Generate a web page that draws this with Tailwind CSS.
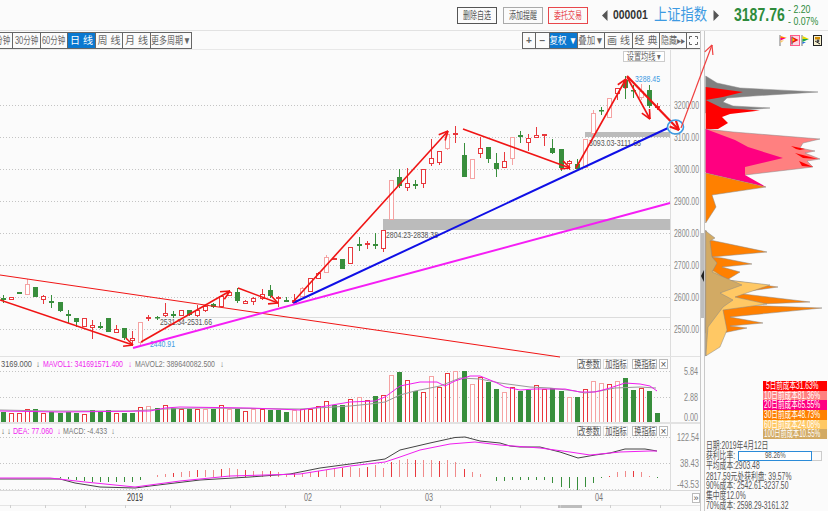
<!DOCTYPE html>
<html lang="zh">
<head>
    <meta charset="UTF-8">
    <title>上证指数 - 日线</title>
    <script src="https://cdn.jsdelivr.net/npm/@tailwindcss/browser@4"></script>
</head>
<body class="w-[828px] h-[511px] overflow-hidden bg-[#fbfbfb] text-[#555] font-['Liberation_Sans','Noto_Sans_CJK_SC',sans-serif]">
    <!-- top bar -->
    <header class="h-[31px] border-b border-[#e2e2e2] flex items-center pl-[457px]">
        <div class="w-[40px] h-[17px] border border-[#555] flex items-center justify-center"><span class="inline-block whitespace-nowrap text-[10px] scale-x-[.7]">删除自选</span></div>
        <div class="w-[40px] h-[17px] ml-[6px] border border-[#aaa] flex items-center justify-center"><span class="inline-block whitespace-nowrap text-[10px] scale-x-[.7]">添加提醒</span></div>
        <div class="w-[40px] h-[17px] ml-[5px] border border-[#e8474c] text-[#e8474c] flex items-center justify-center"><span class="inline-block whitespace-nowrap text-[10px] scale-x-[.7]">委托交易</span></div>
        <svg class="ml-[14px]" width="6" height="11" viewBox="0 0 6 11"><path d="M5.5 0V11L0 5.5Z" fill="#555"/></svg>
        <span class="w-[35px] ml-[5px] inline-block whitespace-nowrap origin-left scale-x-[.8] text-[13px] font-bold text-[#333]">000001</span>
        <span class="w-[54px] ml-[6px] inline-block whitespace-nowrap origin-left scale-x-[.83] text-[16px] text-[#3d9ae2]">上证指数</span>
        <svg class="ml-[5px]" width="6" height="11" viewBox="0 0 6 11"><path d="M0.5 0V11L6 5.5Z" fill="#555"/></svg>
        <span class="w-[50px] ml-[15px] inline-block whitespace-nowrap origin-left scale-x-[.78] text-[18px] font-bold text-[#2e8b3c]">3187.76</span>
        <div class="ml-[4px] flex flex-col text-[#2e8b3c] text-[11px] leading-[12px]">
            <span class="inline-block whitespace-nowrap origin-left scale-x-[.8]">- 2.20</span>
            <span class="inline-block whitespace-nowrap origin-left scale-x-[.8]">- 0.07%</span>
        </div>
    </header>

    <div class="flex h-[480px]">
        <!-- chart column -->
        <div class="w-[701px] shrink-0 border-r border-[#c9c9c9] flex flex-col">
            <div class="h-[19px] shrink-0 border-b border-[#e8e8e8] flex justify-between pt-px">
                <div class="h-[17px] flex overflow-hidden border-y border-[#666] border-r text-[10px] text-[#666]">
                    <div class="w-[27px] -ml-[14px] border-r border-[#666] flex items-center justify-center"><span class="inline-block whitespace-nowrap scale-x-[.75]">15分钟</span></div>
                    <div class="w-[28px] border-r border-[#666] flex items-center justify-center"><span class="inline-block whitespace-nowrap scale-x-[.75]">30分钟</span></div>
                    <div class="w-[27px] border-r border-[#666] flex items-center justify-center"><span class="inline-block whitespace-nowrap scale-x-[.75]">60分钟</span></div>
                    <div class="w-[28px] bg-[#0a78d0] text-white border-r border-[#666] flex items-center justify-center"><span class="inline-block whitespace-nowrap">日 线</span></div>
                    <div class="w-[27px] border-r border-[#666] flex items-center justify-center"><span class="inline-block whitespace-nowrap">周 线</span></div>
                    <div class="w-[28px] border-r border-[#666] flex items-center justify-center"><span class="inline-block whitespace-nowrap">月 线</span></div>
                    <div class="w-[40px] flex items-center justify-center"><span class="inline-block whitespace-nowrap scale-x-[.8]">更多周期▼</span></div>
                </div>
                <div class="h-[17px] flex border-y border-l border-[#666] text-[10px] text-[#666]">
                    <div class="w-[13px] border-r border-[#666] flex items-center justify-center font-bold">+</div>
                    <div class="w-[14px] border-r border-[#666] flex items-center justify-center font-bold">−</div>
                    <div class="w-[28px] bg-[#0a78d0] text-white border-r border-[#666] flex items-center justify-center"><span class="inline-block whitespace-nowrap scale-x-[.85]">复权 ▼</span></div>
                    <div class="w-[27px] border-r border-[#666] flex items-center justify-center"><span class="inline-block whitespace-nowrap scale-x-[.85]">叠加▼</span></div>
                    <div class="w-[28px] border-r border-[#666] flex items-center justify-center"><span class="inline-block whitespace-nowrap">画 线</span></div>
                    <div class="w-[27px] border-r border-[#666] flex items-center justify-center"><span class="inline-block whitespace-nowrap">经 典</span></div>
                    <div class="w-[27px] border-r border-[#666] flex items-center justify-center"><span class="inline-block whitespace-nowrap scale-x-[.8]">隐藏▸▸</span></div>
                    <div class="w-[13px] flex items-center justify-center">
                        <svg width="9" height="9" viewBox="0 0 9 9" fill="none" stroke="#666"><path d="M.5 3V.5H3M6 .5H8.5V3M8.5 6V8.5H6M3 8.5H.5V6"/></svg>
                    </div>
                </div>
            </div>

            <!-- candles -->
            <div class="relative z-10 h-[307px] shrink-0">
                <svg id="price" class="block overflow-visible" width="700" height="307" viewBox="0 50 700 307">
                    <rect x="383" y="219" width="287" height="11" fill="#bbbbbb"/>
                    <rect x="585" y="132" width="85" height="5" fill="#bbbbbb"/>
                    <line x1="160" y1="317.5" x2="670" y2="317.5" stroke="#dcdcdc"/>
                    <line x1="670.5" y1="50" x2="670.5" y2="357" stroke="#dddddd"/>
                    <line x1="0" y1="356.5" x2="700" y2="356.5" stroke="#e2e2e2"/>
                </svg>
                <div class="absolute top-[1px] left-[623px] w-[42px] h-[11px] bg-white border border-[#ccc] flex items-center justify-center text-[10px] text-[#666]"><span class="inline-block whitespace-nowrap scale-x-[.72]">设置均线 ▾</span></div>
            </div>

            <!-- volume -->
            <div class="relative h-[67px] shrink-0 border-b-2 border-[#e2e2e2]">
                <svg id="vol" class="block" width="700" height="65" viewBox="0 357 700 65"></svg>
                <div class="absolute top-[2px] left-[577px] flex text-[10px] text-[#555]">
                    <div class="w-[24px] h-[10px] bg-white border border-[#bbb] flex items-center justify-center"><span class="inline-block whitespace-nowrap scale-x-[.72]">改参数</span></div>
                    <div class="w-[25px] h-[10px] ml-[2px] bg-white border border-[#ddd] flex items-center justify-center"><span class="inline-block whitespace-nowrap scale-x-[.72]">加指标</span></div>
                    <div class="w-[25px] h-[10px] ml-[4px] bg-white border border-[#bbb] flex items-center justify-center"><span class="inline-block whitespace-nowrap scale-x-[.72]">换指标</span></div>
                    <div class="w-[9px] h-[10px] ml-[2px] bg-white border border-[#bbb] flex items-center justify-center">×</div>
                </div>
            </div>

            <!-- macd -->
            <div class="relative h-[67px] shrink-0 border-b border-[#d8d8d8]">
                <svg id="macd" class="block" width="700" height="66" viewBox="0 424 700 66"></svg>
                <div class="absolute top-[2px] left-[577px] flex text-[10px] text-[#555]">
                    <div class="w-[24px] h-[10px] bg-white border border-[#bbb] flex items-center justify-center"><span class="inline-block whitespace-nowrap scale-x-[.72]">改参数</span></div>
                    <div class="w-[25px] h-[10px] ml-[2px] bg-white border border-[#ddd] flex items-center justify-center"><span class="inline-block whitespace-nowrap scale-x-[.72]">加指标</span></div>
                    <div class="w-[25px] h-[10px] ml-[4px] bg-white border border-[#bbb] flex items-center justify-center"><span class="inline-block whitespace-nowrap scale-x-[.72]">换指标</span></div>
                    <div class="w-[9px] h-[10px] ml-[2px] bg-white border border-[#bbb] flex items-center justify-center">×</div>
                </div>
            </div>

            <!-- date strip -->
            <div class="relative flex-1">
                <svg id="dates" class="block" width="700" height="20" viewBox="0 491 700 20">
                    <line x1="0" y1="505.5" x2="700" y2="505.5" stroke="#e4e4e4"/>
                    <rect x="558" y="505" width="24" height="3" fill="#bdbdbd"/>
                </svg>
                <div class="absolute right-0 top-[2px] w-[8px] h-[10px] border border-[#bbb] bg-white flex items-center justify-center text-[9px] leading-none">»</div>
            </div>
        </div>

        <!-- collapse handle -->
        <div class="w-[4px] shrink-0 border-r border-[#c9c9c9] relative">
            <div class="absolute top-[202px] left-0 w-[3px] h-[85px] bg-[#bdbdbd]"></div>
            <svg class="absolute top-[239px] left-0" width="3" height="12" viewBox="0 0 3 12"><path d="M3 0V12L0 6Z" fill="#222"/></svg>
        </div>

        <!-- chip distribution -->
        <div class="flex-1 flex flex-col">
            <div class="h-[19px] shrink-0 flex items-center pl-[74px]">
                <svg width="8" height="11" viewBox="0 0 8 11"><path d="M1 0V11" stroke="#777"/><path d="M1.5 1L8 3H1.5Z" fill="#ff8000"/><path d="M1.5 3H7L1.5 5.5Z" fill="#ff0080"/><path d="M1.5 5.5H5L1.5 8Z" fill="#ffc864"/></svg>
                <svg class="ml-[3px]" width="10" height="11" viewBox="0 0 10 11"><rect x=".5" y=".5" width="9" height="10" fill="#ffd7e4" stroke="#ff5a8a"/><path d="M2 1.5V9.5" stroke="#333"/><path d="M2.5 2L8.5 5L2.5 8Z" fill="#e81010"/><path d="M2.5 3L5 5L2.5 6.5Z" fill="#ffd000"/></svg>
                <svg class="ml-[1px]" width="8" height="11" viewBox="0 0 8 11"><path d="M1 0V11" stroke="#777"/><path d="M1.5 1L8 4H1.5Z" fill="#e6d800"/><path d="M1.5 4H8L1.5 7Z" fill="#1aa84a"/><path d="M1.5 7H5L1.5 9Z" fill="#1d6fe0"/></svg>
                <svg class="ml-[4px]" width="9" height="11" viewBox="0 0 9 11"><rect x=".5" y=".5" width="8" height="10" fill="#f6f0d0" stroke="#222"/><path d="M2 2H7V4.5H2Z" fill="#d08a00"/><path d="M2 6L7 9" stroke="#222"/><circle cx="5" cy="6" r="1.4" fill="#4a4a4a"/></svg>
            </div>
            <svg id="chips" class="block shrink-0" width="122" height="331" viewBox="705 50 122 331">
                <!-- upper lobe -->
                <polygon fill="#808080" stroke="#888" stroke-width=".5" points="705.7,76 717,83 740,88 818,92 753,96 727,98 723,102 733,106 770,108 705.7,113"/>
                <polygon fill="#ff0000" points="705.7,87 743,92 723,97 705.7,100 722,108 760,110.5 730,114 722,117 728,123 718,129 705.7,129"/>
                <polygon fill="#ff8080" stroke="#888" stroke-width=".5" points="705.7,129 733,132 820,139 803,143 800,148 815,151 805,153 820,159 807,161 813,167 745,175 705.7,172"/>
                <polygon fill="#ff0000" points="791,146 805,149 800,150 796,149"/>
                <polygon fill="#ff0000" points="795,153 818,159 803,158"/>
                <polygon fill="#ff0000" points="799,161 813,167 802,166"/>
                <polygon fill="#ff0080" points="705.7,129 735,140 748,147 783,158 745,167 745,175 766,187 705.7,173"/>
                <polygon fill="#ff8000" stroke="#888" stroke-width=".5" points="705.7,173 766,187 712,195 716,207 705.7,223"/>
                <!-- lower lobe -->
                <polygon fill="#ff8000" stroke="#888" stroke-width=".5" points="705.7,230 710,240 767,252 712,257 722,258 752,264 722,267 740,272 727,280 778,287 735,293 810,302 738,305 822,308 730,317 763,323 730,326 747,328 723,333 705.7,333"/>
                <polygon fill="#ffc864" stroke="#888" stroke-width=".5" points="705.7,356 705.7,270 714,271 727,280 770,285 735,297 767,304 723,310 727,330 720,347"/>
                <polygon fill="#d2aa64" stroke="#888" stroke-width=".5" points="705.7,231 715,238 710,241 712,257 717,263 712,272 742,285 720,293 733,300 723,307 708,327 705.7,356"/>
            </svg>
            <div class="flex justify-end pr-[5px]">
                <div class="w-[64px] text-[10px] leading-[10px] text-white">
                    <div class="h-[9.7px] pl-[3px] bg-[#ff0000] overflow-hidden"><span class="inline-block whitespace-nowrap origin-left scale-x-[.66]">5日前成本31.63%</span></div>
                    <div class="h-[9.7px] pl-[1px] bg-[#ff8080] overflow-hidden"><span class="inline-block whitespace-nowrap origin-left scale-x-[.66]">10日前成本81.36%</span></div>
                    <div class="h-[9.7px] pl-[1px] bg-[#ff0080] overflow-hidden"><span class="inline-block whitespace-nowrap origin-left scale-x-[.66]">20日前成本65.55%</span></div>
                    <div class="h-[9.7px] pl-[1px] bg-[#ff8000] overflow-hidden"><span class="inline-block whitespace-nowrap origin-left scale-x-[.66]">30日前成本48.73%</span></div>
                    <div class="h-[9.7px] pl-[1px] bg-[#ffc864] overflow-hidden"><span class="inline-block whitespace-nowrap origin-left scale-x-[.66]">60日前成本24.08%</span></div>
                    <div class="h-[9.7px] pl-[1px] bg-[#d2aa64] overflow-hidden"><span class="inline-block whitespace-nowrap origin-left scale-x-[.62]">100日前成本10.55%</span></div>
                </div>
            </div>
            <div class="mt-[2px] ml-[1px] text-[10px] leading-[9.7px] text-[#555]">
                <div class="whitespace-nowrap origin-left scale-x-[.68]">日期:2019年4月12日</div>
                <div class="flex items-center h-[10px]">
                    <span class="w-[32px] whitespace-nowrap origin-left scale-x-[.68]">获利比率:</span>
                    <div class="w-[84px] h-[10px] border border-[#ccc] flex">
                        <div class="w-[74px] -my-px -ml-px border border-[#2b8bd8] bg-white flex items-center justify-center"><span class="inline-block whitespace-nowrap scale-x-[.68] text-[9px]">98.26%</span></div>
                    </div>
                </div>
                <div class="whitespace-nowrap origin-left scale-x-[.68]">平均成本:2903.48</div>
                <div class="mt-px whitespace-nowrap origin-left scale-x-[.68]">2817.59元处获利盘: 39.57%</div>
                <div class="whitespace-nowrap origin-left scale-x-[.68]">90%成本: 2542.61-3237.50</div>
                <div class="whitespace-nowrap origin-left scale-x-[.68]">集中度12.0%</div>
                <div class="whitespace-nowrap origin-left scale-x-[.68]">70%成本: 2598.29-3161.32</div>
            </div>
        </div>
    </div>

    <script>
        const NS = 'http://www.w3.org/2000/svg';
        const RED = '#e8383d', PALE = '#f5a3a3', GREEN = '#388e3c';
        const xAt = i => 3 + i * 8.08;
        function el(parent, name, attrs, text) {
            const node = document.createElementNS(NS, name);
            for (const k in attrs) node.setAttribute(k, attrs[k]);
            if (text) node.textContent = text;
            parent.appendChild(node);
            return node;
        }
        // text is squeezed sideways in the source picture, hence textLength
        function label(parent, x, y, str, len, fill, size) {
            el(parent, 'text', { x, y, fill, 'font-size': size || 10, textLength: len, lengthAdjust: 'spacingAndGlyphs' }, str);
        }
        function dotted(parent, y) {
            el(parent, 'line', { x1: 0, y1: y + .5, x2: 670, y2: y + .5, stroke: '#c4c4c4', 'stroke-dasharray': '1 2' });
        }
        function line(parent, pts, stroke, width) {
            el(parent, 'polyline', { points: pts.map(p => p.join(',')).join(' '), fill: 'none', stroke, 'stroke-width': width || 1 });
        }
        function arrow(parent, x1, y1, x2, y2, width, stroke) {
            const color = stroke || '#f01414';
            el(parent, 'line', { x1, y1, x2, y2, stroke: color, 'stroke-width': width });
            const a = Math.atan2(y2 - y1, x2 - x1);
            [-.45, .45].forEach(d => {
                el(parent, 'line', { x1: x2, y1: y2, x2: x2 - 10 * Math.cos(a + d), y2: y2 - 10 * Math.sin(a + d), stroke: color, 'stroke-width': width });
            });
        }

        // hi, top, bottom, low, colour
        const candles = [
            [295,298,300,303,'g'],[297,297,299,300,'r'],[292,292,294,294,'g'],[279,284,294,295,'r'],[287,287,297,297,'g'],[295,296,299,304,'r'],
            [295,301,303,308,'g'],[302,302,311,312,'g'],[310,314,316,323,'g'],[318,318,322,327,'g'],[318,318,326,326,'r'],[320,325,327,339,'r'],
            [322,326,328,329,'g'],[318,318,332,332,'g'],[325,329,332,332,'r'],[328,328,338,340,'g'],[331,338,340,346,'r'],[322,322,342,346,'r'],
            [315,317,318,321,'r'],[316,317,318,320,'g'],[303,313,315,317,'r'],[311,314,316,318,'g'],[310,310,315,315,'r'],[310,310,315,316,'g'],
            [305,310,315,317,'r'],[305,306,310,312,'r'],[303,304,307,308,'g'],[295,296,306,306,'r'],[290,292,295,295,'r'],[288,292,301,303,'g'],
            [300,301,303,304,'r'],[297,298,301,305,'r'],[289,294,298,300,'r'],[285,290,296,298,'g'],[296,297,298,307,'r'],[297,300,302,302,'g'],
            [294,300,302,305,'r'],[287,288,296,297,'r'],[278,278,291,291,'r'],[272,273,278,278,'r'],[255,257,272,273,'r'],[258,258,259,259,'r'],
            [259,259,269,269,'g'],[247,247,263,263,'r'],[237,244,246,251,'g'],[241,243,244,249,'r'],[233,244,246,249,'g'],[230,230,248,252,'r'],
            [180,180,219,219,'r'],[169,177,186,188,'g'],[168,183,187,191,'r'],[180,184,186,189,'g'],[169,169,183,188,'r'],[139,158,163,166,'r'],
            [151,151,162,165,'r'],[134,134,148,150,'r'],[126,133,134,143,'r'],[143,155,177,177,'g'],[159,159,178,179,'r'],[137,148,153,158,'r'],
            [147,147,159,163,'g'],[153,163,169,177,'g'],[152,161,167,168,'r'],[137,137,158,165,'r'],[131,135,137,143,'g'],[134,138,142,151,'r'],
            [127,135,137,138,'r'],[134,134,135,146,'r'],[139,148,153,154,'g'],[149,149,168,171,'g'],[160,161,163,170,'r'],[159,164,169,169,'g'],
            [139,139,167,168,'r'],[110,113,133,135,'r'],[107,110,111,115,'g'],[98,98,117,118,'r'],[88,88,93,100,'r'],[76,80,88,99,'g'],
            [85,90,91,98,'g'],[84,91,97,100,'r'],[85,90,106,108,'g'],[103,106,107,110,'r']
        ];
        const paleCandles = [3,17,37,40,48,55,58,63,72,73,75,79];

        const price = document.getElementById('price');
        [3200,3100,3000,2900,2800,2700,2600,2500].forEach((v, i) => {
            const y = 105 + i * 32;
            dotted(price, y);
            label(price, 674, y + 4, v.toFixed(2), 25, '#888');
        });
        candles.forEach((c, i) => {
            const x = Math.round(xAt(i));
            const col = c[4] === 'g' ? GREEN : (paleCandles.includes(i) ? PALE : RED);
            el(price, 'line', { x1: x + .5, y1: c[0], x2: x + .5, y2: c[3], stroke: col });
            if (c[4] === 'g') el(price, 'rect', { x: x - 2, y: c[1], width: 5, height: Math.max(c[2] - c[1], 1.5), fill: col });
            else el(price, 'rect', { x: x - 2 + .5, y: c[1] + .5, width: 4, height: Math.max(c[2] - c[1], 1), fill: '#fff', stroke: col });
        });

        label(price, 160, 325, '2531.34-2531.66', 52, '#555', 9);
        label(price, 386, 238, '2804.23-2838.38', 52, '#555', 9);
        label(price, 589, 146, '3093.03-3111.66', 52, '#555', 9);
        label(price, 635, 82, '3288.45', 25, '#3d9ae2', 9);
        label(price, 150, 347, '2440.91', 25, '#3d9ae2', 9);

        line(price, [[0,275],[560,357]], '#f01414');
        line(price, [[293,303],[668,128]], '#0f0fe6', 2);
        line(price, [[133,348],[670,203]], '#f51ef5', 2);
        arrow(price, 0, 300, 133, 345, 1.6);
        arrow(price, 141, 342, 230, 291, 1.6);
        arrow(price, 238, 288, 278, 303, 1.6);
        arrow(price, 293, 302, 448, 131, 1.6);
        arrow(price, 463, 129, 570, 168, 1.6);
        arrow(price, 576, 168, 626, 79, 1.6);
        arrow(price, 627, 77, 650, 119, 1.6);
        arrow(price, 627, 76, 679, 130, 2.2);
        el(price, 'ellipse', { cx: 675.5, cy: 127, rx: 8, ry: 7, fill: 'none', stroke: '#3d9ae2', 'stroke-width': 1.6 });
        arrow(price, 681, 128, 712, 45, 1.2, '#f04040');

        // volume: bar top, colour (g / r / p = pale red)
        const volumes = [
            '412g','413r','413r','409r','409g','413r','412g','413g','412g','413g','414r','410g','412g','410g','413r','413g','413g','407r','406p','408g',
            '405r','408g','409r','409g','409r','409p','409g','405r','409p','409g','411r','409p','409r','410g','410g','412g','410p','409r','409r','406r',
            '401r','405g','405g','399r','397p','400r','396g','395r','375p','372g','380r','391g','392r','376p','387r','373r','371p','371g','384p','377r',
            '382g','389g','392p','387r','391g','390g','385r','389r','388g','391g','397p','397g','389r','381p','383p','384r','381p','378g','390g','388r',
            '391g','413g'
        ];
        const vol = document.getElementById('vol');
        [371, 397].forEach(y => dotted(vol, y));
        el(vol, 'line', { x1: 670.5, y1: 357, x2: 670.5, y2: 422, stroke: '#dddddd' });
        volumes.forEach((v, i) => {
            const top = parseInt(v), kind = v.slice(-1), x = Math.round(xAt(i));
            if (kind === 'g') el(vol, 'rect', { x: x - 2, y: top, width: 5, height: 422 - top, fill: GREEN });
            else el(vol, 'rect', { x: x - 1.5, y: top + .5, width: 4, height: 422 - top, fill: '#fff', stroke: kind === 'r' ? RED : PALE });
        });
        line(vol, [[0,410],[50,411],[130,411],[165,409],[200,408],[300,409],[350,406],[370,404],[385,402],[400,395],[415,391],[440,386],[460,378],[480,379],[500,383],[530,387],[550,388],[575,391],[585,393],[600,391],[615,388],[640,387],[656,388]], '#999');
        line(vol, [[0,411],[60,412],[150,411],[165,408],[180,407],[250,408],[300,410],[320,407],[350,402],[375,401],[385,397],[400,386],[420,382],[437,382],[445,386],[455,381],[470,376],[480,376],[495,382],[505,387],[520,390],[535,389],[565,389],[580,392],[595,392],[610,388],[625,383],[640,384],[650,386],[657,391]], '#f01ef0');
        label(vol, 1, 367, '3169.000', 31, '#555', 8.5);
        label(vol, 36, 367, '↓', 4, '#555', 8.5);
        label(vol, 43, 367, 'MAVOL1: 341691571.400', 80, '#f01ef0', 8.5);
        label(vol, 128, 367, '↓', 4, '#f01ef0', 8.5);
        label(vol, 135, 367, 'MAVOL2: 389640082.500', 80, '#777', 8.5);
        label(vol, 220, 367, '↓', 4, '#777', 8.5);
        label(vol, 684, 375, '5.84', 14, '#888');
        label(vol, 684, 401, '2.88', 14, '#888');
        label(vol, 684, 421, '0.00', 14, '#888');

        // macd histogram in px, + is up
        const hist = [0,0,0,0,0,0,0,-1,-2,-3,-4,-5,-5,-5,-5,-5,-5,-3,0,2,3,4,5,6,7,7,7,8,9,8,7,6,6,6,5,3,4,4,5,6,7,8,9,10,9,10,12,9,15,17,18,17,17,17,16,17,15,8,5,3,0,-4,-4,-3,-3,-3,-3,-3,-6,-10,-11,-13,-10,-6,-1,1,5,6,6,5,1,-1];
        const macd = document.getElementById('macd');
        [437, 463].forEach(y => dotted(macd, y));
        el(macd, 'line', { x1: 0, y1: 489.5, x2: 670, y2: 489.5, stroke: '#d0d0d0', 'stroke-dasharray': '1 2' });
        el(macd, 'line', { x1: 670.5, y1: 424, x2: 670.5, y2: 490, stroke: '#dddddd' });
        hist.forEach((h, i) => {
            if (!h) return;
            const x = Math.round(xAt(i)) + .5;
            el(macd, 'line', { x1: x, y1: 477, x2: x, y2: 477 - h, stroke: h > 0 ? (i % 3 ? '#f08a8a' : RED) : GREEN });
        });
        line(macd, [[0,479],[60,479],[75,483],[100,487],[135,488],[150,486],[200,480],[250,477],[290,474],[320,468],[335,466],[350,464],[385,459],[400,450],[430,443],[455,437.5],[465,437],[480,441],[500,443],[510,446],[520,447],[540,447],[560,452],[578,458],[595,455],[610,453],[625,449],[645,449],[657,451]], '#444');
        line(macd, [[0,478],[50,478],[85,482],[135,487],[180,481],[230,476],[300,474],[350,466],[385,462],[400,457],[420,450],[450,444],[475,442],[500,445],[540,448],[570,452],[590,455],[620,452],[650,451],[657,451]], '#f01ef0');
        label(macd, 1, 434, '↓', 4, '#555', 8.5);
        label(macd, 7, 434, '↓', 4, '#555', 8.5);
        label(macd, 13, 434, 'DEA: 77.060', 40, '#f01ef0', 8.5);
        label(macd, 57, 434, '↓', 4, '#f01ef0', 8.5);
        label(macd, 63, 434, 'MACD: -4.433', 44, '#777', 8.5);
        label(macd, 111, 434, '↓', 4, '#777', 8.5);
        label(macd, 677, 441, '122.54', 22, '#888');
        label(macd, 680, 467, '38.43', 19, '#888');
        label(macd, 677, 488, '-43.53', 22, '#888');

        const dates = document.getElementById('dates');
        [[127,'2019',16,'#333'],[304,'02',8,'#777'],[425,'03',8,'#777'],[595,'04',8,'#777']].forEach(d => label(dates, d[0], 501, d[1], d[2], d[3]));
        [10,45,85,125,170,230,285,340,380,440,490,520,560,610,660].forEach(x => {
            el(dates, 'line', { x1: x + .5, y1: 505, x2: x + .5, y2: 508, stroke: '#cfcfcf' });
        });
    </script>
</body>
</html>
